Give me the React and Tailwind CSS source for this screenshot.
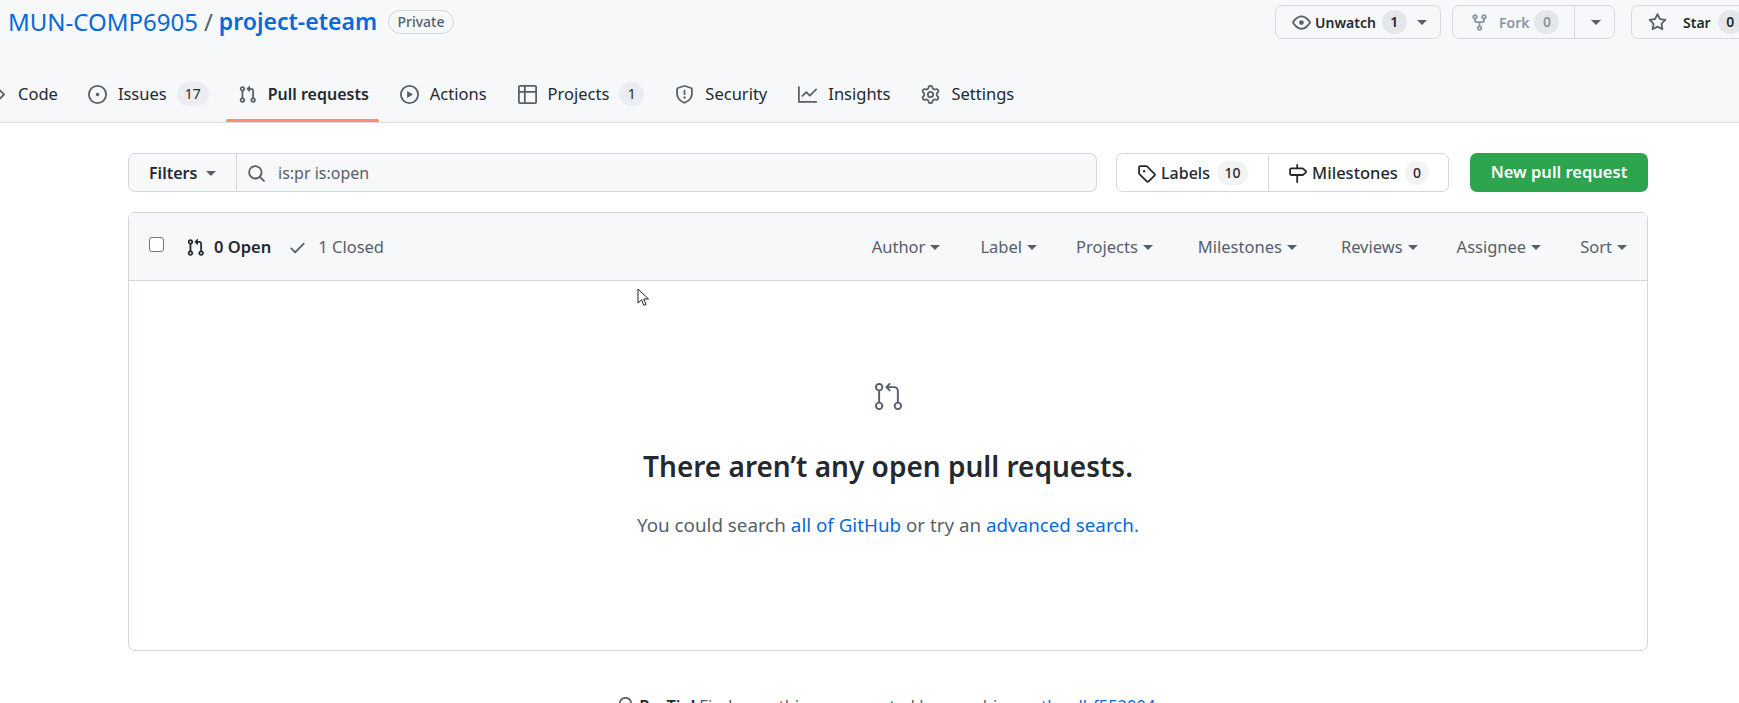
import React from "react";
import { GoGitPullRequest } from "react-icons/go";

const P = {
  pr: "M1.5 3.25a2.25 2.25 0 1 1 3 2.122v5.256a2.251 2.251 0 1 1-1.5 0V5.372A2.25 2.25 0 0 1 1.5 3.25Zm5.677-.177L9.573.677A.25.25 0 0 1 10 .854V2.5h1A2.5 2.5 0 0 1 13.5 5v5.628a2.251 2.251 0 1 1-1.5 0V5a1 1 0 0 0-1-1h-1v1.646a.25.25 0 0 1-.427.177L7.177 3.427a.25.25 0 0 1 0-.354ZM3.75 2.5a.75.75 0 1 0 0 1.5.75.75 0 0 0 0-1.5Zm0 9.5a.75.75 0 1 0 0 1.5.75.75 0 0 0 0-1.5Zm8.25.75a.75.75 0 1 0 1.5 0 .75.75 0 0 0-1.5 0Z",
  issue: "M8 9.5a1.5 1.5 0 1 0 0-3 1.5 1.5 0 0 0 0 3ZM8 0a8 8 0 1 1 0 16A8 8 0 0 1 8 0ZM1.5 8a6.5 6.5 0 1 0 13 0 6.5 6.5 0 0 0-13 0Z",
  play: "M8 0a8 8 0 1 1 0 16A8 8 0 0 1 8 0ZM1.5 8a6.5 6.5 0 1 0 13 0 6.5 6.5 0 0 0-13 0Zm4.879-2.773 4.264 2.559a.25.25 0 0 1 0 .428l-4.264 2.559A.25.25 0 0 1 6 10.559V5.442a.25.25 0 0 1 .379-.215Z",
  table: "M0 1.75C0 .784.784 0 1.75 0h12.5C15.216 0 16 .784 16 1.75v12.5A1.75 1.75 0 0 1 14.25 16H1.75A1.75 1.75 0 0 1 0 14.25ZM6.5 6.5v8h7.75a.25.25 0 0 0 .25-.25V6.5Zm8-1.5V1.75a.25.25 0 0 0-.25-.25H6.5V5Zm-13 1.5v7.75c0 .138.112.25.25.25H5v-8ZM5 5V1.5H1.75a.25.25 0 0 0-.25.25V5Z",
  shield: "M7.467.133a1.748 1.748 0 0 1 1.066 0l5.25 1.68A1.75 1.75 0 0 1 15 3.48V7c0 1.566-.32 3.182-1.303 4.682-.983 1.498-2.585 2.813-5.032 3.855a1.697 1.697 0 0 1-1.33 0c-2.447-1.042-4.049-2.357-5.032-3.855C1.32 10.182 1 8.566 1 7V3.48a1.75 1.75 0 0 1 1.217-1.667Zm.61 1.429a.25.25 0 0 0-.153 0l-5.25 1.68a.25.25 0 0 0-.174.238V7c0 1.358.275 2.666 1.057 3.86.784 1.194 2.121 2.34 4.366 3.297a.196.196 0 0 0 .154 0c2.245-.956 3.582-2.104 4.366-3.298C13.225 9.666 13.5 8.36 13.5 7V3.48a.251.251 0 0 0-.174-.237l-5.25-1.68ZM8.75 4.75v3a.75.75 0 0 1-1.5 0v-3a.75.75 0 0 1 1.5 0ZM9 10.5a1 1 0 1 1-2 0 1 1 0 0 1 2 0Z",
  graph: "M1.5 1.75V13.5h13.75a.75.75 0 0 1 0 1.5H.75a.75.75 0 0 1-.75-.75V1.75a.75.75 0 0 1 1.5 0Zm14.28 2.53-5.25 5.25a.75.75 0 0 1-1.06 0L7 7.06 4.28 9.78a.751.751 0 0 1-1.042-.018.751.751 0 0 1-.018-1.042l3.25-3.25a.75.75 0 0 1 1.06 0L10 7.94l4.72-4.72a.751.751 0 0 1 1.042.018.751.751 0 0 1 .018 1.042Z",
  gear: "M8 0a8.2 8.2 0 0 1 .701.031C9.444.095 9.99.645 10.16 1.29l.288 1.107c.018.066.079.158.212.224.231.114.454.243.668.386.123.082.233.09.299.071l1.103-.303c.644-.176 1.392.021 1.82.63.27.385.506.792.704 1.218.315.675.111 1.422-.364 1.891l-.814.806c-.049.048-.098.147-.088.294.016.257.016.515 0 .772-.01.147.038.246.088.294l.814.806c.475.469.679 1.216.364 1.891a7.977 7.977 0 0 1-.704 1.217c-.428.61-1.176.807-1.82.63l-1.102-.302c-.067-.019-.177-.011-.3.071a5.909 5.909 0 0 1-.668.386c-.133.066-.194.158-.211.224l-.29 1.106c-.168.646-.715 1.196-1.458 1.26a8.006 8.006 0 0 1-1.402 0c-.743-.064-1.289-.614-1.458-1.26l-.289-1.106c-.018-.066-.079-.158-.212-.224a5.738 5.738 0 0 1-.668-.386c-.123-.082-.233-.09-.299-.071l-1.103.303c-.644.176-1.392-.021-1.82-.63a8.12 8.12 0 0 1-.704-1.218c-.315-.675-.111-1.422.363-1.891l.815-.806c.05-.048.098-.147.088-.294a6.214 6.214 0 0 1 0-.772c.01-.147-.038-.246-.088-.294l-.815-.806C.635 6.045.431 5.298.746 4.623a7.92 7.92 0 0 1 .704-1.217c.428-.61 1.176-.807 1.82-.63l1.102.302c.067.019.177.011.3-.071.214-.143.437-.272.668-.386.133-.066.194-.158.211-.224l.29-1.106C6.009.645 6.556.095 7.299.03 7.53.01 7.764 0 8 0Zm-.571 1.525c-.036.003-.108.036-.137.146l-.289 1.105c-.147.561-.549.967-.998 1.189-.173.086-.34.183-.5.29-.417.278-.97.423-1.529.27l-1.103-.303c-.109-.03-.175.016-.195.045-.22.312-.412.644-.573.99-.014.031-.021.11.059.19l.815.806c.411.406.562.957.53 1.456a4.709 4.709 0 0 0 0 .582c.032.499-.119 1.05-.53 1.456l-.815.806c-.081.08-.073.159-.059.19.162.346.353.677.573.989.02.03.085.076.195.046l1.102-.303c.56-.153 1.113-.008 1.53.27.161.107.328.204.501.29.447.222.85.629.997 1.189l.289 1.105c.029.109.101.143.137.146a6.6 6.6 0 0 0 1.142 0c.036-.003.108-.036.137-.146l.289-1.105c.147-.561.549-.967.998-1.189.173-.086.34-.183.5-.29.417-.278.97-.423 1.529-.27l1.103.303c.109.029.175-.016.195-.045.22-.313.411-.644.573-.99.014-.031.021-.11-.059-.19l-.815-.806c-.411-.406-.562-.957-.53-1.456a4.709 4.709 0 0 0 0-.582c-.032-.499.119-1.05.53-1.456l.815-.806c.081-.08.073-.159.059-.19a6.464 6.464 0 0 0-.573-.989c-.02-.03-.085-.076-.195-.046l-1.102.303c-.56.153-1.113.008-1.53-.27a4.44 4.44 0 0 0-.501-.29c-.447-.222-.85-.629-.997-1.189l-.289-1.105c-.029-.11-.101-.143-.137-.146a6.6 6.6 0 0 0-1.142 0ZM11 8a3 3 0 1 1-6 0 3 3 0 0 1 6 0ZM9.5 8a1.5 1.5 0 1 0-3.001.001A1.5 1.5 0 0 0 9.5 8Z",
  eye: "M8 2c1.981 0 3.671.992 4.933 2.078 1.27 1.091 2.187 2.345 2.637 3.023a1.62 1.62 0 0 1 0 1.798c-.45.678-1.367 1.932-2.637 3.023C11.67 13.008 9.981 14 8 14c-1.981 0-3.671-.992-4.933-2.078C1.797 10.83.88 9.576.43 8.898a1.62 1.62 0 0 1 0-1.798c.45-.677 1.367-1.931 2.637-3.022C4.33 2.992 6.019 2 8 2ZM1.679 7.932a.12.12 0 0 0 0 .136c.411.622 1.241 1.75 2.366 2.717C5.176 11.758 6.527 12.5 8 12.5c1.473 0 2.825-.742 3.955-1.715 1.124-.967 1.954-2.096 2.366-2.717a.12.12 0 0 0 0-.136c-.412-.621-1.242-1.75-2.366-2.717C10.824 4.242 9.473 3.5 8 3.5c-1.473 0-2.825.742-3.955 1.715-1.124.967-1.954 2.096-2.366 2.717ZM8 10a2 2 0 1 1-.001-3.999A2 2 0 0 1 8 10Z",
  fork: "M5 5.372v.878c0 .414.336.75.75.75h4.5a.75.75 0 0 0 .75-.75v-.878a2.25 2.25 0 1 1 1.5 0v.878a2.25 2.25 0 0 1-2.25 2.25h-1.5v2.128a2.251 2.251 0 1 1-1.5 0V8.5h-1.5A2.25 2.25 0 0 1 3.5 6.25v-.878a2.25 2.25 0 1 1 1.5 0ZM5 3.25a.75.75 0 1 0-1.5 0 .75.75 0 0 0 1.5 0Zm6.75.75a.75.75 0 1 0 0-1.5.75.75 0 0 0 0 1.5Zm-3 8.75a.75.75 0 1 0-1.5 0 .75.75 0 0 0 1.5 0Z",
  star: "M8 .25a.75.75 0 0 1 .673.418l1.882 3.815 4.21.612a.75.75 0 0 1 .416 1.279l-3.046 2.97.719 4.192a.751.751 0 0 1-1.088.791L8 12.347l-3.766 1.98a.75.75 0 0 1-1.088-.79l.72-4.194L.818 6.374a.75.75 0 0 1 .416-1.28l4.21-.611L7.327.668A.75.75 0 0 1 8 .25Zm0 2.445L6.615 5.5a.75.75 0 0 1-.564.41l-3.097.45 2.24 2.184a.75.75 0 0 1 .216.664l-.528 3.084 2.769-1.456a.75.75 0 0 1 .698 0l2.77 1.456-.53-3.084a.75.75 0 0 1 .216-.664l2.24-2.183-3.096-.45a.75.75 0 0 1-.564-.41L8 2.694Z",
  tag: "M1 7.775V2.75C1 1.784 1.784 1 2.75 1h5.025c.464 0 .91.184 1.238.513l6.25 6.25a1.75 1.75 0 0 1 0 2.474l-5.026 5.026a1.75 1.75 0 0 1-2.474 0l-6.25-6.25A1.75 1.75 0 0 1 1 7.775Zm1.5 0c0 .066.026.13.073.177l6.25 6.25a.25.25 0 0 0 .354 0l5.025-5.025a.25.25 0 0 0 0-.354l-6.25-6.25a.25.25 0 0 0-.177-.073H2.75a.25.25 0 0 0-.25.25ZM6 5a1 1 0 1 1 0 2 1 1 0 0 1 0-2Z",
  milestone: "M7.75 0a.75.75 0 0 1 .75.75V3h3.634c.414 0 .814.147 1.13.414l2.07 1.75a1.75 1.75 0 0 1 0 2.672l-2.07 1.75a1.75 1.75 0 0 1-1.13.414H8.5v5.25a.75.75 0 0 1-1.5 0V10H2.75A1.75 1.75 0 0 1 1 8.25v-3.5C1 3.784 1.784 3 2.75 3H7V.75A.75.75 0 0 1 7.75 0Zm4.384 8.5a.25.25 0 0 0 .161-.06l2.07-1.75a.248.248 0 0 0 0-.38l-2.07-1.75a.25.25 0 0 0-.161-.06H2.75a.25.25 0 0 0-.25.25v3.5c0 .138.112.25.25.25h9.384Z",
  search: "M10.68 11.74a6 6 0 0 1-7.922-8.982 6 6 0 0 1 8.982 7.922l3.04 3.04a.749.749 0 0 1-.326 1.275.749.749 0 0 1-.734-.215ZM11.5 7a4.499 4.499 0 1 0-8.997 0A4.499 4.499 0 0 0 11.5 7Z",
  check: "M13.78 4.22a.75.75 0 0 1 0 1.06l-7.25 7.25a.75.75 0 0 1-1.06 0L2.22 9.28a.751.751 0 0 1 .018-1.042.751.751 0 0 1 1.042-.018L6 10.94l6.72-6.72a.75.75 0 0 1 1.06 0Z",
  bulb: "M8 1.5c-2.363 0-4 1.69-4 3.75 0 .984.424 1.625.984 2.304l.214.253c.223.264.47.556.673.848.284.411.537.896.621 1.49a.75.75 0 0 1-1.484.211c-.04-.282-.163-.547-.37-.847a8.456 8.456 0 0 0-.542-.68c-.084-.1-.173-.205-.268-.32C3.201 7.75 2.5 6.766 2.5 5.25 2.5 2.31 4.863 0 8 0s5.5 2.31 5.5 5.25c0 1.516-.701 2.5-1.328 3.259-.095.115-.184.22-.268.319-.207.245-.383.453-.541.681-.208.3-.33.565-.37.847a.751.751 0 0 1-1.485-.212c.084-.593.337-1.078.621-1.489.203-.292.45-.584.673-.848.075-.088.147-.173.213-.253.561-.679.985-1.32.985-2.304 0-2.06-1.637-3.75-4-3.75ZM5.75 12h4.5a.75.75 0 0 1 0 1.5h-4.5a.75.75 0 0 1 0-1.5ZM6 15.25a.75.75 0 0 1 .75-.75h2.5a.75.75 0 0 1 0 1.5h-2.5a.75.75 0 0 1-.75-.75Z",
  chevron: "M6.22 3.22a.75.75 0 0 1 1.06 0l4.25 4.25a.75.75 0 0 1 0 1.06l-4.25 4.25a.751.751 0 0 1-1.042-.018.751.751 0 0 1-.018-1.042L9.94 8 6.22 4.28a.75.75 0 0 1 0-1.06Z",
};

const Oct = ({ name, className = "" }) => (
  <svg viewBox="0 0 16 16" fill="currentColor" className={"shrink-0 w-[19px] h-[19px] " + className}>
    <path d={P[name]} />
  </svg>
);

const Caret = ({ className = "" }) => (
  <span className={"inline-block w-0 h-0 border-x-[5px] border-x-transparent border-t-[5px] border-t-current " + className} />
);

const Counter = ({ children, className = "" }) => (
  <span className={"inline-flex items-center justify-center rounded-full h-[24px] text-[14px] leading-none " + className}>{children}</span>
);

const Tab = ({ icon, label, count, active, cw, className = "" }) => (
  <div className={"relative flex items-center h-[38px] " + (active ? "font-semibold text-[16px] " : "text-[16.5px] ") + className}>
    <Oct name={icon} className="text-[#57606a] mr-[11px]" />
    <span>{label}</span>
    {count && <Counter className={"ml-[10px] bg-[#eaeef2] " + cw}>{count}</Counter>}
    {active && <span className="absolute -left-[12px] -right-[10px] -bottom-[9px] h-[3px] bg-[#fd8c73] rounded-sm" />}
  </div>
);

const Sort = ({ label, className = "" }) => (
  <span className={"flex items-center text-[#57606a] gap-[5px] " + className}>{label}<Caret /></span>
);

export default function App() {
  return (
    <div className="relative w-[1739px] h-[703px] overflow-hidden bg-white text-[#24292f] text-[16px]" style={{ fontFamily: '"Noto Sans", sans-serif' }}>
      <header className="h-[123px] bg-[#f6f8fa] border-b border-[#d8dee4] flex flex-col">
        <div className="flex items-start pt-[5px] pl-[8px] h-[75px] shrink-0">
          <div className="flex items-center h-[33px] leading-none">
            <span className="text-[#0969da] text-[24px]">MUN-COMP6905</span>
            <span className="text-[#57606a] text-[24px] mx-[6px]">/</span>
            <span className="text-[#0969da] font-semibold text-[23px]">project-eteam</span>
            <span className="ml-[11px] h-[24px] w-[66px] rounded-full border border-[#d0d7de] flex items-center justify-center text-[14px] text-[#57606a] font-medium">Private</span>
          </div>
          <div className="ml-auto flex items-center w-[464px] shrink-0 gap-[11px] text-[14px] font-semibold">
            <div className="w-[166px] shrink-0 h-[34px] rounded-[7px] border border-[#d5d9de] flex items-center pl-[16px] gap-[4px]">
              <Oct name="eye" className="text-[#57606a]" />
              <span>Unwatch</span>
              <Counter className="w-[25px] ml-[2px] bg-[#e4e6e8]">1</Counter>
              <Caret className="ml-[6px] text-[#57606a]" />
            </div>
            <div className="w-[163px] shrink-0 h-[34px] rounded-[7px] border border-[#d5d9de] flex items-center text-[#8c959f]">
              <div className="w-[122px] flex items-center pl-[17px] h-full border-r border-[#d5d9de]">
                <Oct name="fork" />
                <span className="ml-[10px]">Fork</span>
                <Counter className="w-[25px] ml-[5px] bg-[#e4e6e8]">0</Counter>
              </div>
              <Caret className="ml-[16px] text-[#57606a]" />
            </div>
            <div className="w-[130px] ml-[5px] shrink-0 h-[34px] rounded-[7px] border border-[#d5d9de] flex items-center pl-[16px]">
              <Oct name="star" className="text-[#57606a]" />
              <span className="ml-[16px]">Star</span>
              <Counter className="w-[25px] ml-[7px] bg-[#e4e6e8]">0</Counter>
            </div>
          </div>
        </div>
        <nav className="flex items-center h-[38px] text-[16.5px] shrink-0">
          <Oct name="chevron" className="-ml-[9px] mr-[8px] text-[#57606a]" />
          <span className="mr-[30px]">Code</span>
          <div className="flex items-center gap-[31px]">
            <Tab icon="issue" label="Issues" count="17" cw="w-[32px]" />
            <Tab icon="pr" label="Pull requests" active className="-ml-[2px]" />
            <Tab icon="play" label="Actions" />
            <Tab icon="table" label="Projects" count="1" cw="w-[25px]" />
            <Tab icon="shield" label="Security" />
            <Tab icon="graph" label="Insights" />
            <Tab icon="gear" label="Settings" />
          </div>
        </nav>
      </header>

      <main className="ml-[128px] w-[1520px]">
        <div className="flex items-stretch h-[39px] mt-[30px] text-[16px]">
          <div className="flex items-center w-[109px] pl-[20px] pt-[1px] gap-[9px] font-semibold border border-[#d0d7de] rounded-l-[7px] bg-[#f6f8fa]">
            Filters <Caret className="text-[#57606a]" />
          </div>
          <div className="flex items-center w-[860px] border border-l-0 border-[#d0d7de] rounded-r-[7px] bg-[#f6f8fa] pl-[10px] pt-[1px] text-[#57606a]">
            <Oct name="search" className="mr-[12px]" />
            is:pr is:open
          </div>
          <div className="flex ml-[19px] w-[333px] border border-[#d0d7de] rounded-[7px] font-medium pt-[1px]">
            <div className="w-[152px] flex items-center justify-center border-r border-[#d0d7de] gap-[5px]">
              <Oct name="tag" />Labels
              <Counter className="w-[31px] ml-[2px] bg-[#f2f3f5]">10</Counter>
            </div>
            <div className="flex-1 flex items-center justify-center gap-[5px] text-[16.5px]">
              <Oct name="milestone" />Milestones
              <Counter className="w-[24px] ml-[2px] bg-[#f2f3f5]">0</Counter>
            </div>
          </div>
          <div className="ml-[21px] w-[178px] rounded-[7px] bg-[#2da44e] text-white font-semibold text-[16.5px] flex items-center justify-center">New pull request</div>
        </div>

        <section className="mt-[20px] h-[439px] border border-[#d0d7de] rounded-[7px]">
          <div className="flex items-center h-[68px] bg-[#f6f8fa] border-b border-[#d0d7de] rounded-t-[7px] px-[20px] pt-[1px] text-[16.5px]">
            <span className="w-[15px] h-[15px] rounded-[3px] border border-[#767676] bg-white -mt-[6px]" />
            <Oct name="pr" className="ml-[22px]" />
            <span className="ml-[9px] font-semibold">0 Open</span>
            <Oct name="check" className="ml-[17px] text-[#57606a]" />
            <span className="ml-[11px] text-[#57606a]">1 Closed</span>
            <div className="ml-auto flex items-center gap-[39px]">
              <Sort label="Author" className="mr-[1px]" />
              <Sort label="Label" />
              <Sort label="Projects" />
              <Sort label="Milestones" className="ml-[6px]" />
              <Sort label="Reviews" className="ml-[5px]" />
              <Sort label="Assignee" />
              <Sort label="Sort" />
            </div>
          </div>
          <div className="flex flex-col items-center pt-[100px]">
            <GoGitPullRequest className="w-[31px] h-[31px] text-[#57606a]" />
            <h3 className="mt-[33px] text-[28px] leading-[42px] font-semibold">There aren’t any open pull requests.</h3>
            <p className="mt-[25px] text-[#57606a] text-[18.8px] leading-[27px]">
              You could search <span className="text-[#0969da]">all of GitHub</span> or try an <span className="text-[#0969da]">advanced search</span>.
            </p>
          </div>
        </section>

        <p className="mt-[43px] flex items-center justify-center text-[16.5px] text-[#57606a]">
          <Oct name="bulb" className="mr-[4px]" />
          <strong className="text-[#24292f] font-semibold mr-[4px]">ProTip!</strong> Find everything you created by searching&nbsp;<span className="text-[#0969da]">author:lbf552004</span>.
        </p>
      </main>

      <svg className="absolute left-[637px] top-[288px]" width="13" height="19" viewBox="0 0 13 19">
        <path d="M1 1v14l3.5-3.2 2.4 5.6 2.2-1-2.4-5.4H11.5z" fill="#fff" stroke="#222" strokeWidth="1" />
      </svg>
    </div>
  );
}
